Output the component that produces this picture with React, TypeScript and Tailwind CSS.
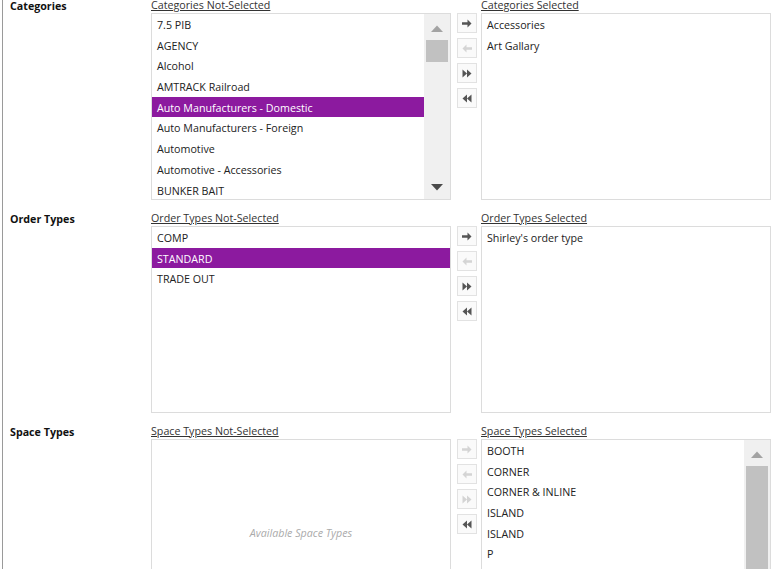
import React from "react";

type Item = { label: string; selected?: boolean };

const ROW = "h-[20.7px] leading-[19px] pt-[2px] pl-[5px] whitespace-nowrap";

function ArrowRight({ on }: { on: boolean }) {
  return (
    <svg width="10" height="9" viewBox="0 0 10 9">
      <path d="M0 3.2H5.5V0.5L9.5 4.5L5.5 8.5V5.8H0Z" fill={on ? "#555" : "#d4d4d4"} />
    </svg>
  );
}
function ArrowLeft({ on }: { on: boolean }) {
  return (
    <svg width="10" height="9" viewBox="0 0 10 9">
      <path d="M10 3.2H4.5V0.5L0.5 4.5L4.5 8.5V5.8H10Z" fill={on ? "#555" : "#d4d4d4"} />
    </svg>
  );
}
function DoubleRight({ on }: { on: boolean }) {
  return (
    <svg width="10" height="9" viewBox="0 0 10 9">
      <path d="M0.5 0.5L5 4.5L0.5 8.5ZM5 0.5L9.5 4.5L5 8.5Z" fill={on ? "#555" : "#d4d4d4"} />
    </svg>
  );
}
function DoubleLeft({ on }: { on: boolean }) {
  return (
    <svg width="10" height="9" viewBox="0 0 10 9">
      <path d="M9.5 0.5L5 4.5L9.5 8.5ZM5 0.5L0.5 4.5L5 8.5Z" fill={on ? "#555" : "#d4d4d4"} />
    </svg>
  );
}

function Btn({ children }: { children: React.ReactNode }) {
  return (
    <div className="w-[20px] h-[20px] border border-[#e2e2e2] bg-[#fafafa] flex items-center justify-center">
      {children}
    </div>
  );
}

function Scrollbar({ full }: { full?: boolean }) {
  return (
    <div className="w-[26px] shrink-0 bg-[#f0f0f0] flex flex-col items-center relative">
      <div className="h-[26px] w-full flex items-center justify-center pt-[2px]">
        <svg width="12" height="7" viewBox="0 0 12 7">
          <path d="M0 7L6 0.5L12 7Z" fill="#a3a3a3" />
        </svg>
      </div>
      <div className={full ? "w-[22px] flex-1 bg-[#c1c1c1]" : "w-[22px] h-[22px] bg-[#c1c1c1]"} />
      {!full && (
        <div className="absolute bottom-[8px] left-0 w-full flex justify-center">
          <svg width="12" height="7" viewBox="0 0 12 7">
            <path d="M0 0L12 0L6 6.5Z" fill="#4a4a4a" />
          </svg>
        </div>
      )}
    </div>
  );
}

function ListBox({
  items,
  width,
  scroll,
  fullThumb,
  placeholder,
}: {
  items: Item[];
  width: string;
  scroll?: boolean;
  fullThumb?: boolean;
  placeholder?: string;
}) {
  return (
    <div className={`${width} h-[187px] border border-[#dcdcdc] bg-white flex overflow-hidden`}>
      <div className="flex-1 min-w-0 relative">
        {items.map((it, i) => (
          <div
            key={i}
            className={
              it.selected
                ? `${ROW} bg-[#8c1a9f] text-white`
                : `${ROW} text-[#222]`
            }
          >
            {it.label}
          </div>
        ))}
        {placeholder && (
          <div className="absolute inset-0 flex items-center justify-center italic text-[#aaaaaa] pt-[1px]">
            {placeholder}
          </div>
        )}
      </div>
      {scroll && <Scrollbar full={fullThumb} />}
    </div>
  );
}

function Section({
  title,
  left,
  right,
  leftTitle,
  rightTitle,
  leftScroll,
  rightScroll,
  buttons,
  placeholder,
}: {
  title: string;
  left: Item[];
  right: Item[];
  leftTitle: string;
  rightTitle: string;
  leftScroll?: boolean;
  rightScroll?: boolean;
  buttons: [boolean, boolean, boolean, boolean];
  placeholder?: string;
}) {
  return (
    <div className="flex mb-[13px]">
      <div className="w-[141px] shrink-0 font-bold text-[#111] leading-[12px]">{title}</div>
      <div className="flex">
        <div className="flex flex-col">
          <div className="h-[13px] leading-[11px] underline text-[#333]">{leftTitle}</div>
          <ListBox items={left} width="w-[300px]" scroll={leftScroll} placeholder={placeholder} />
        </div>
        <div className="ml-[6px] mt-[13px] flex flex-col gap-[5px]">
          <Btn><ArrowRight on={buttons[0]} /></Btn>
          <Btn><ArrowLeft on={buttons[1]} /></Btn>
          <Btn><DoubleRight on={buttons[2]} /></Btn>
          <Btn><DoubleLeft on={buttons[3]} /></Btn>
        </div>
        <div className="ml-[4px] flex flex-col">
          <div className="h-[13px] leading-[11px] underline text-[#333]">{rightTitle}</div>
          <ListBox items={right} width="w-[290px]" scroll={rightScroll} fullThumb />
        </div>
      </div>
    </div>
  );
}

export default function App() {
  return (
    <div className="w-[783px] h-[569px] overflow-hidden bg-white font-['Open_Sans',sans-serif] text-[10.7px]">
      <div className="ml-[2px] border-l border-[#9a9a9a] pl-[7px] min-h-[569px]">
        <Section
          title="Categories"
          leftTitle="Categories Not-Selected"
          rightTitle="Categories Selected"
          leftScroll
          buttons={[true, false, true, true]}
          left={[
            { label: "7.5 PIB" },
            { label: "AGENCY" },
            { label: "Alcohol" },
            { label: "AMTRACK Railroad" },
            { label: "Auto Manufacturers - Domestic", selected: true },
            { label: "Auto Manufacturers - Foreign" },
            { label: "Automotive" },
            { label: "Automotive - Accessories" },
            { label: "BUNKER BAIT" },
          ]}
          right={[{ label: "Accessories" }, { label: "Art Gallary" }]}
        />
        <Section
          title="Order Types"
          leftTitle="Order Types Not-Selected"
          rightTitle="Order Types Selected"
          buttons={[true, false, true, true]}
          left={[{ label: "COMP" }, { label: "STANDARD", selected: true }, { label: "TRADE OUT" }]}
          right={[{ label: "Shirley's order type" }]}
        />
        <Section
          title="Space Types"
          leftTitle="Space Types Not-Selected"
          rightTitle="Space Types Selected"
          rightScroll
          buttons={[false, false, false, true]}
          placeholder="Available Space Types"
          left={[]}
          right={[
            { label: "BOOTH" },
            { label: "CORNER" },
            { label: "CORNER & INLINE" },
            { label: "ISLAND" },
            { label: "ISLAND" },
            { label: "P" },
            { label: "PENINSULA" },
            { label: "SPLIT ISLAND" },
          ]}
        />
      </div>
    </div>
  );
}
